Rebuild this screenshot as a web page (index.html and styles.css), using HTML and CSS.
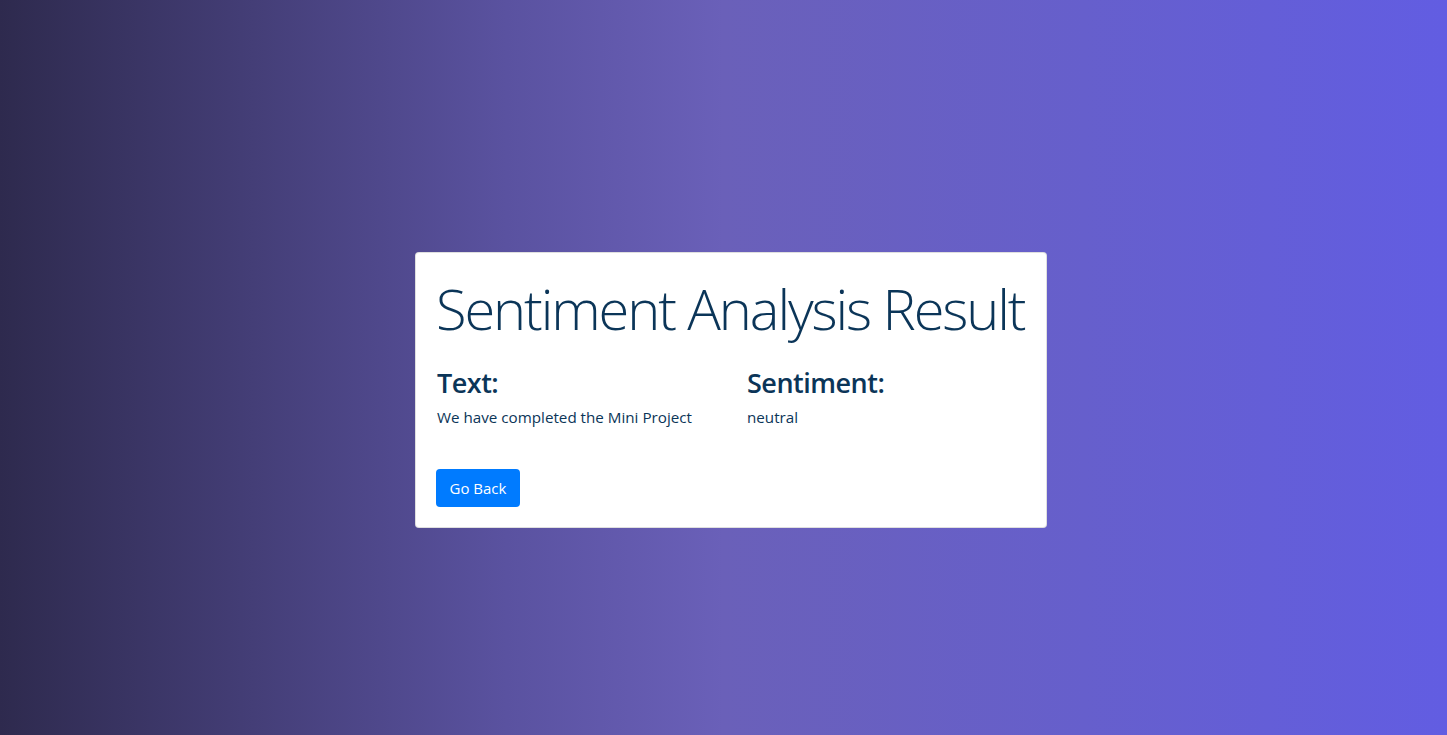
FILE: index.html
```html
<!DOCTYPE html>
<html lang="en">
<head>
<meta charset="utf-8">
<title>Sentiment Analysis Result</title>
<link rel="stylesheet" href="styles.css">
</head>
<body>
<main class="page">
  <section class="card">
    <h1 class="title">Sentiment Analysis Result</h1>
    <div class="row">
      <div class="col">
        <h3 class="label">Text:</h3>
        <p class="value">We have completed the Mini Project</p>
      </div>
      <div class="col">
        <h3 class="label">Sentiment:</h3>
        <p class="value">neutral</p>
      </div>
    </div>
    <a class="btn" href="#">Go Back</a>
  </section>
</main>
</body>
</html>
```
FILE: styles.css
```css
* { box-sizing: border-box; }
html, body { margin: 0; height: 100%; }
body {
  font-family: "Open Sans", "Noto Sans", "Liberation Sans", sans-serif;
  background: linear-gradient(to right, #2e2a4e 0%, #5a52a0 35%, #6a60b9 50%, #665fcc 75%, #625de2 100%);
  color: #0b3558;
}
.page {
  min-height: 100vh;
  display: flex;
  justify-content: center;
  align-items: center;
  padding: 45px 0 0 15px;
}
.card {
  width: 632px;
  background: #fff;
  border: 1px solid rgba(0,0,0,.125);
  border-radius: 4px;
  padding: 22px 20px 20px;
}
.title {
  margin: 0 0 24px;
  font-size: 56px;
  font-weight: 300;
  line-height: 1.2;
  letter-spacing: -2.1px;
  white-space: nowrap;
}
.row {
  display: grid;
  grid-template-columns: 310px 1fr;
}
.label {
  margin: 0 0 7px;
  padding-left: 1px;
  font-size: 27px;
  font-weight: 600;
  line-height: 1.2;
  letter-spacing: -0.5px;
}
.value {
  margin: 0 0 40px;
  padding-left: 1px;
  font-size: 15.2px;
  line-height: 1.5;
}
.btn {
  display: inline-block;
  background: #007bff;
  color: #fff;
  text-decoration: none;
  font-size: 15px;
  line-height: 24px;
  padding: 7px 13.5px;
  border-radius: 4px;
}
```
